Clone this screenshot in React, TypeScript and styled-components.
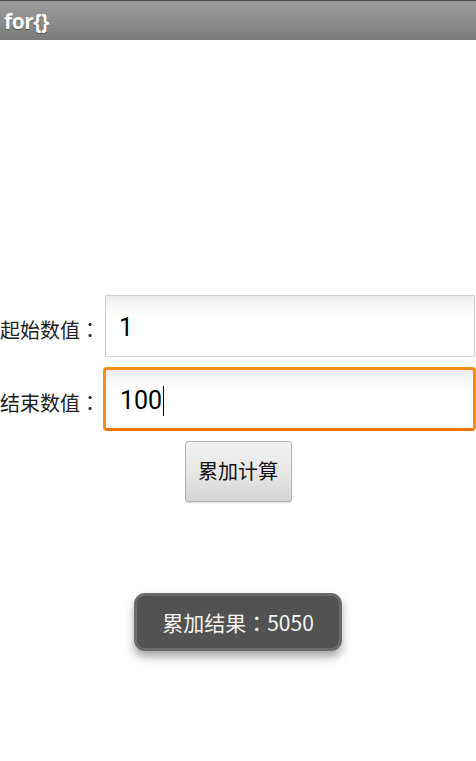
import React from 'react';
import styled, { createGlobalStyle } from 'styled-components';

const GlobalStyle = createGlobalStyle`
  html, body {
    margin: 0;
    padding: 0;
    background: #ffffff;
  }
  body {
    font-family: Roboto, "Noto Sans CJK TC", "Noto Sans", sans-serif;
  }
`;

const Screen = styled.div`
  position: relative;
  width: 476px;
  height: 761px;
  overflow: hidden;
  background: #ffffff;
  display: flex;
  flex-direction: column;
`;

const TitleBar = styled.div`
  height: 40px;
  box-sizing: border-box;
  border-top: 1px solid #4a4a4a;
  background: linear-gradient(to bottom, #9b9b9b 0%, #8c8c8c 50%, #7b7b7b 100%);
  display: flex;
  align-items: center;
  padding-left: 4px;
  color: #ffffff;
  font-family: "Open Sans", "DejaVu Sans", sans-serif;
  font-weight: 700;
  font-size: 21px;
  letter-spacing: -0.5px;
  text-shadow: 0 1px 1px rgba(0, 0, 0, 0.35);
`;

const Form = styled.div`
  display: flex;
  flex-direction: column;
  padding-top: 255px;
  gap: 10px;
`;

const Row = styled.div`
  display: flex;
  align-items: center;
`;

const Label = styled.div`
  width: 100px;
  flex-shrink: 0;
  padding-top: 6px;
  font-size: 20px;
  color: #222222;
  white-space: nowrap;
  font-family: "Noto Sans CJK TC", sans-serif;
`;

const Field = styled.div<{ focused?: boolean }>`
  box-sizing: border-box;
  height: ${(p) => (p.focused ? '64px' : '62px')};
  margin-left: ${(p) => (p.focused ? '3px' : '5px')};
  margin-right: ${(p) => (p.focused ? '0' : '1px')};
  flex: 1;
  display: flex;
  align-items: center;
  padding-left: ${(p) => (p.focused ? '14px' : '13px')};
  padding-top: 3px;
  font-size: 25px;
  color: #000000;
  font-family: Roboto, "Noto Sans", sans-serif;
  border-radius: ${(p) => (p.focused ? '4px' : '1px')};
  border: ${(p) => (p.focused ? '3px solid #f58d15' : '1px solid #cfcfcf')};
  border-bottom-color: ${(p) => (p.focused ? '#ee7400' : '#d6d6d6')};
  background: linear-gradient(to bottom, #ececec 0px, #f8f8f8 10px, #ffffff 20px);
`;

const Caret = styled.span`
  display: inline-block;
  width: 1px;
  height: 30px;
  background: #000000;
  margin-left: 1px;
`;

const ButtonRow = styled.div`
  display: flex;
  justify-content: center;
`;

const Button = styled.div`
  box-sizing: border-box;
  width: 107px;
  height: 61px;
  border: 1px solid #b4b4b4;
  border-radius: 3px;
  background: linear-gradient(to bottom, #f2f2f2 0%, #e6e6e6 55%, #d4d4d4 100%);
  box-shadow: 0 1px 1px rgba(0, 0, 0, 0.15);
  display: flex;
  align-items: center;
  justify-content: center;
  padding-bottom: 2px;
  font-size: 20px;
  color: #111111;
  font-family: "Noto Sans CJK TC", sans-serif;
`;

const Toast = styled.div`
  position: absolute;
  left: 134px;
  top: 593px;
  width: 208px;
  height: 58px;
  box-sizing: border-box;
  border: 3px solid #6a6a6a;
  border-radius: 11px;
  background: #525252;
  box-shadow: 0 6px 10px rgba(0, 0, 0, 0.35);
  display: flex;
  align-items: center;
  justify-content: center;
  color: #f4f4f4;
  font-size: 21px;
  font-family: "Noto Sans CJK TC", sans-serif;
`;

export default function App() {
  return (
    <Screen>
      <GlobalStyle />
      <TitleBar>for{'{}'}</TitleBar>
      <Form>
        <Row>
          <Label>起始数值：</Label>
          <Field>1</Field>
        </Row>
        <Row>
          <Label>结束数值：</Label>
          <Field focused>
            100
            <Caret />
          </Field>
        </Row>
        <ButtonRow>
          <Button>累加计算</Button>
        </ButtonRow>
      </Form>
      <Toast>累加结果：5050</Toast>
    </Screen>
  );
}
